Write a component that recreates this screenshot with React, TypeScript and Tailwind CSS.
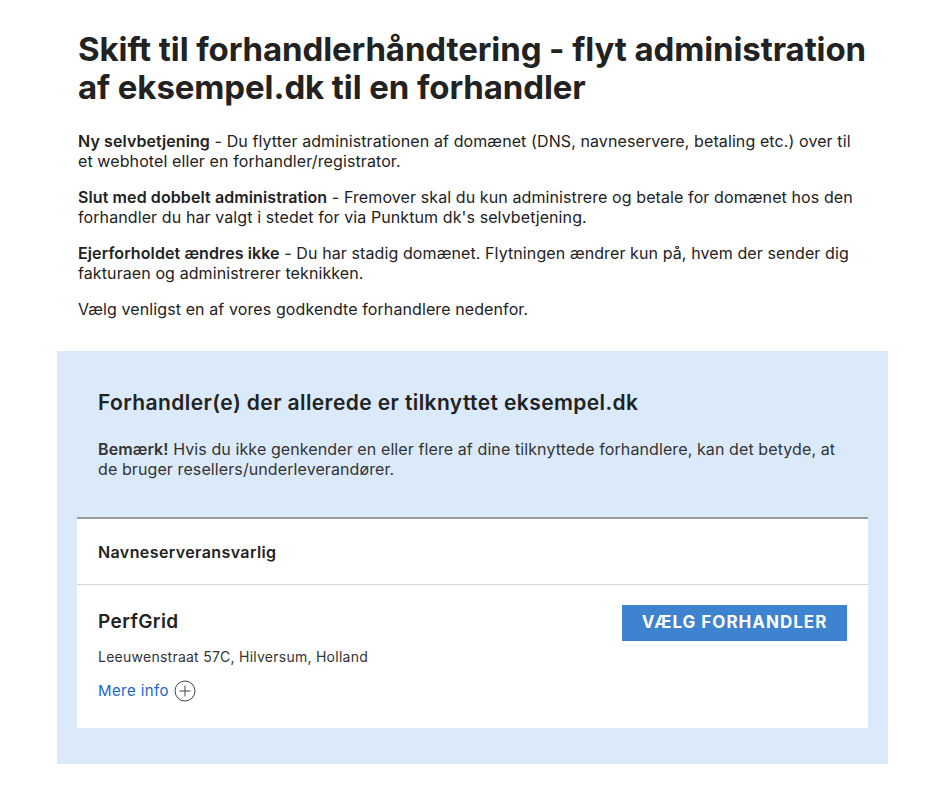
export default function App() {
  return (
    <div className="min-h-screen bg-white font-['Inter',sans-serif] text-[#222]">
      <div className="w-[831px] ml-[57px] pt-[30px]">
        <div className="px-[21px]">
          <h1 className="mr-[-20px] text-[33px] font-bold leading-[38px] tracking-[-0.1px]">
            Skift til forhandlerhåndtering - flyt administration af eksempel.dk til en forhandler
          </h1>
          <div className="mt-[25px] space-y-[16px] text-[16px] leading-[20px] tracking-[0.1px]">
            <p>
              <b className="font-semibold">Ny selvbetjening</b> - Du flytter administrationen af domænet (DNS,
              navneservere, betaling etc.) over til et webhotel eller en forhandler/registrator.
            </p>
            <p>
              <b className="font-semibold">Slut med dobbelt administration</b> - Fremover skal du kun administrere og
              betale for domænet hos den forhandler du har valgt i stedet for via Punktum dk's selvbetjening.
            </p>
            <p>
              <b className="font-semibold">Ejerforholdet ændres ikke</b> - Du har stadig domænet. Flytningen ændrer kun
              på, hvem der sender dig fakturaen og administrerer teknikken.
            </p>
            <p>Vælg venligst en af vores godkendte forhandlere nedenfor.</p>
          </div>
        </div>

        <section className="mt-[32px] bg-[#dbeafa] px-[20px] pt-[38px] pb-[36px]">
          <div className="px-[21px]">
            <h2 className="text-[21px] font-semibold leading-[28px] tracking-[0.4px]">
              Forhandler(e) der allerede er tilknyttet eksempel.dk
            </h2>
            <p className="mt-[22px] text-[16px] leading-[20px] tracking-[0.1px] text-[#333]">
              <b className="font-semibold">Bemærk!</b> Hvis du ikke genkender en eller flere af dine tilknyttede
              forhandlere, kan det betyde, at de bruger resellers/underleverandører.
            </p>
          </div>

          <div className="mt-[38px] bg-white border-t-2 border-[#9b9b9b]">
            <div className="px-[21px] h-[66px] flex items-center border-b border-[#d4d4d4]">
              <h3 className="text-[16px] font-semibold tracking-[0.4px]">Navneserveransvarlig</h3>
            </div>
            <div className="px-[21px] pt-[20px] pb-[25px] flex justify-between">
              <div>
                <div className="text-[19px] font-semibold leading-[34px] tracking-[0.4px]">PerfGrid</div>
                <div className="mt-[8px] text-[14px] leading-[20px] tracking-[0.25px] text-[#333]">
                  Leeuwenstraat 57C, Hilversum, Holland
                </div>
                <a href="#" className="mt-[13px] inline-flex items-center gap-[5px] text-[15px] tracking-[0.4px] text-[#1a66cc]">
                  Mere info
                  <svg width="22" height="22" viewBox="0 0 22 22" fill="none" stroke="#444" strokeWidth="1">
                    <circle cx="11" cy="11" r="10" />
                    <path d="M11 5.5v11M5.5 11h11" />
                  </svg>
                </a>
              </div>
              <button className="h-[36px] w-[225px] bg-[#3d83d0] text-white text-[17px] font-bold uppercase tracking-[1px]">
                Vælg forhandler
              </button>
            </div>
          </div>
        </section>
      </div>
    </div>
  );
}
